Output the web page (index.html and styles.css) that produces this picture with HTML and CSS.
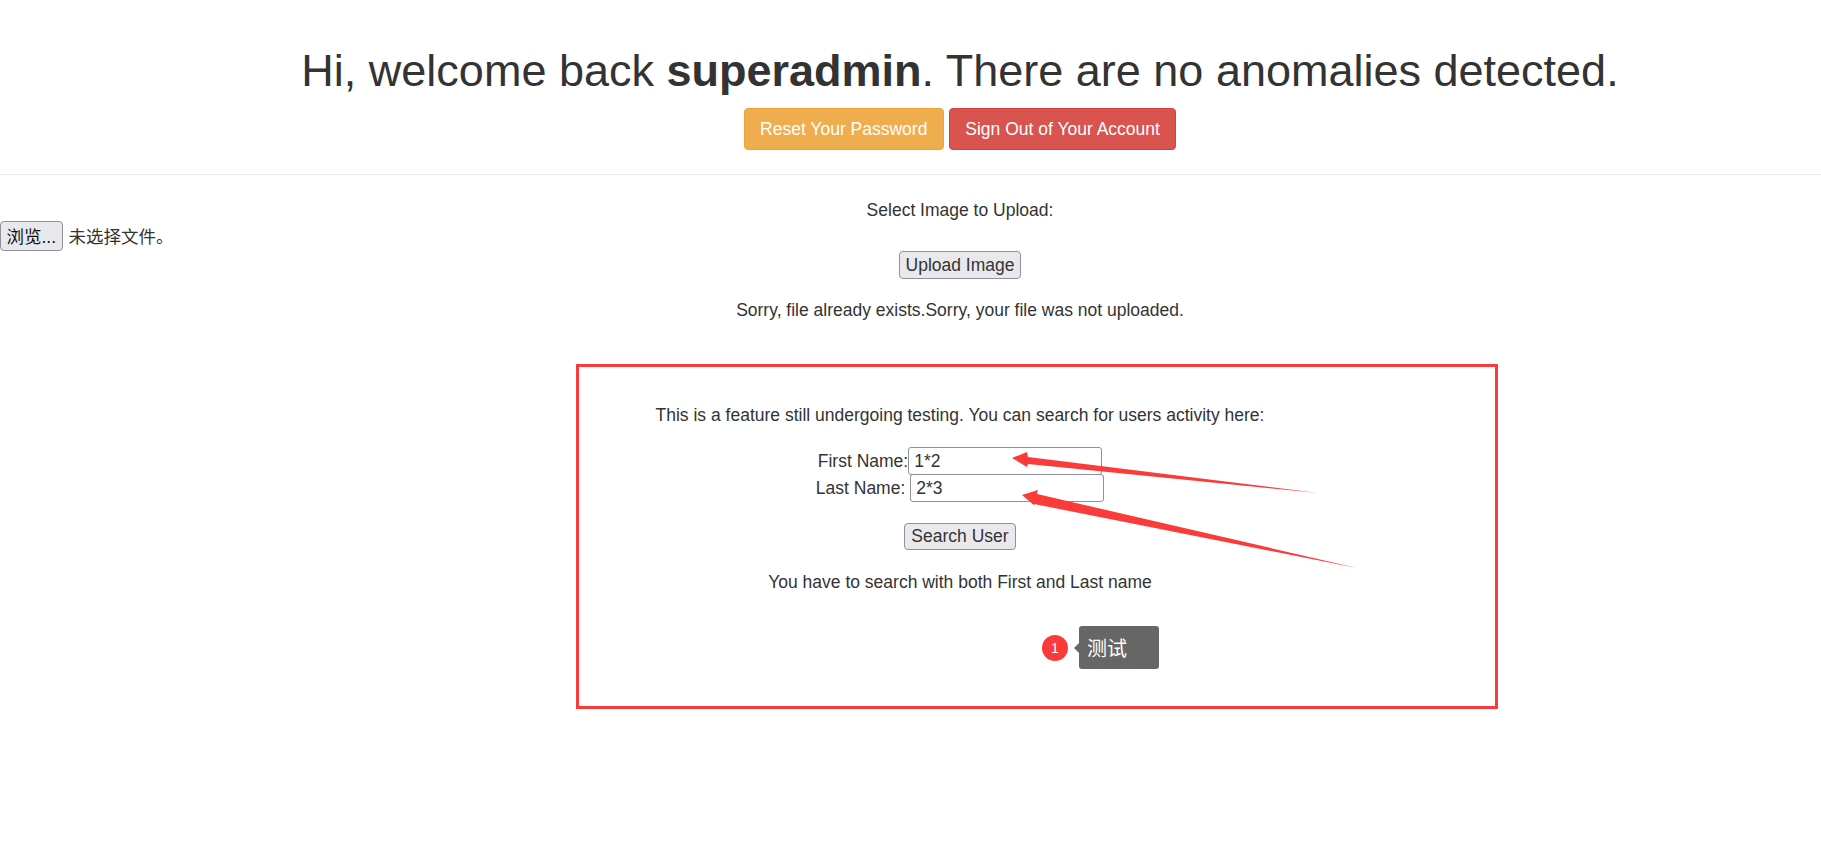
FILE: index.html
```html
<!DOCTYPE html>
<html lang="en">
<head>
  <meta charset="UTF-8" />
  <title>Welcome</title>
  <link rel="stylesheet" href="styles.css">
</head>
<body>
  <div class="page">
    <header class="page-header">
      <h1>Hi, welcome back <b>superadmin</b>. There are no anomalies detected.</h1>
      <p class="actions">
        <a href="#" class="btn btn-warning">Reset Your Password</a>
        <a href="#" class="btn btn-danger">Sign Out of Your Account</a>
      </p>
    </header>

    <form class="upload">
      <div class="upload-label">Select Image to Upload:</div>
      <div class="file-row">
        <button type="button" class="native file-btn">浏览...</button>
        <span class="file-name">未选择文件。</span>
      </div>
      <button type="button" class="native">Upload Image</button>
      <p class="message">Sorry, file already exists.Sorry, your file was not uploaded.</p>
    </form>

    <form class="search">
      <p class="search-intro">This is a feature still undergoing testing. You can search for users activity here:</p>
      <div class="field-row">First Name:<input class="field" type="text" value="1*2"></div>
      <div class="field-row">Last Name: <input class="field" type="text" value="2*3"></div>
      <button type="button" class="native search-btn">Search User</button>
      <p class="message search-message">You have to search with both First and Last name</p>
    </form>
  </div>

  <!-- annotations drawn over the screenshot -->
  <div class="mark-box"></div>
  <svg class="arrows" width="1821" height="841" viewBox="0 0 1821 841">
    <polygon points="1012,458 1027,452 1028,457 1318,493 1028,464 1027,467"/>
    <polygon points="1022,495 1038,490 1037,494 1357,568 1034,504 1035,506"/>
  </svg>
  <div class="note">
    <span class="note-num">1</span>
    <span class="note-tip">测试</span>
  </div>
</body>
</html>
```

FILE: styles.css
```css
* {
  box-sizing: border-box;
}

body {
  margin: 0;
  height: 841px;
  background: #fff;
  color: #333;
  font-family: "Liberation Sans", "Noto Sans CJK SC", sans-serif;
  font-size: 17.5px;
}

/* the page centres on x=960, wider than the window */
.page {
  padding-left: 99px;
  text-align: center;
}

.page-header {
  height: 175px;
  margin-left: -99px;
  padding: 44px 0 0 99px;
  border-bottom: 1px solid #eee;
}

h1 {
  margin: 0;
  font-size: 45px;
  font-weight: 400;
  line-height: 54px;
}

.actions {
  margin: 10px 0 0;
}

.btn {
  display: inline-block;
  height: 42px;
  padding: 0 15.5px;
  border: 1px solid transparent;
  border-radius: 4px;
  color: #fff;
  font-size: 17.5px;
  line-height: 40px;
  text-decoration: none;
}

.btn-warning {
  background: #f0ad4e;
  border-color: #eea236;
}

.btn-danger {
  background: #d9534f;
  border-color: #d43f3a;
}

.native {
  height: 28px;
  padding: 0 6px;
  border: 1px solid #8f8f9d;
  border-radius: 4px;
  background: #e9e9ed;
  color: #333;
  font-family: inherit;
  font-size: 17.5px;
}

.upload-label {
  margin-top: 25px;
  line-height: 20px;
}

.file-row {
  display: flex;
  align-items: center;
  gap: 6px;
  height: 30px;
  margin: 1px 0 0 -99px;
}

.file-btn {
  height: 30px;
  padding: 0 5.5px 2px;
  color: #111;
}

.file-name {
  padding-bottom: 2px;
}

.message {
  margin: 20px 0 0;
  line-height: 22px;
}

.search {
  margin-top: 83px;
}

.search-intro {
  margin: 0 0 21px;
  line-height: 22px;
}

.field-row {
  height: 27px;
  line-height: 27px;
}

.field {
  width: 194px;
  height: 28px;
  padding: 0 5px;
  border: 1px solid #8f8f9d;
  border-radius: 3px;
  color: #333;
  font-family: inherit;
  font-size: 17.5px;
}

.search-btn {
  margin-top: 22px;
  height: 27px;
}

.search-message {
  margin-top: 21px;
}

.mark-box {
  position: absolute;
  left: 576px;
  top: 364px;
  width: 922px;
  height: 345px;
  border: 3px solid #fb3a3a;
}

.arrows {
  position: absolute;
  left: 0;
  top: 0;
  fill: #fb3a3a;
}

.note {
  position: absolute;
  left: 1042px;
  top: 626px;
  display: flex;
  align-items: center;
  gap: 11px;
}

.note-num {
  width: 26px;
  height: 26px;
  border-radius: 50%;
  background: #fb3a3a;
  color: #fff;
  font-size: 14px;
  line-height: 26px;
  text-align: center;
}

.note-tip {
  position: relative;
  width: 80px;
  height: 43px;
  padding: 2px 0 0 8px;
  border-radius: 3px;
  background: #666;
  color: #fff;
  font-size: 20px;
  line-height: 43px;
}

.note-tip::before {
  content: "";
  position: absolute;
  left: -5px;
  top: 17px;
  border-top: 5px solid transparent;
  border-bottom: 5px solid transparent;
  border-right: 5px solid #666;
}
```
